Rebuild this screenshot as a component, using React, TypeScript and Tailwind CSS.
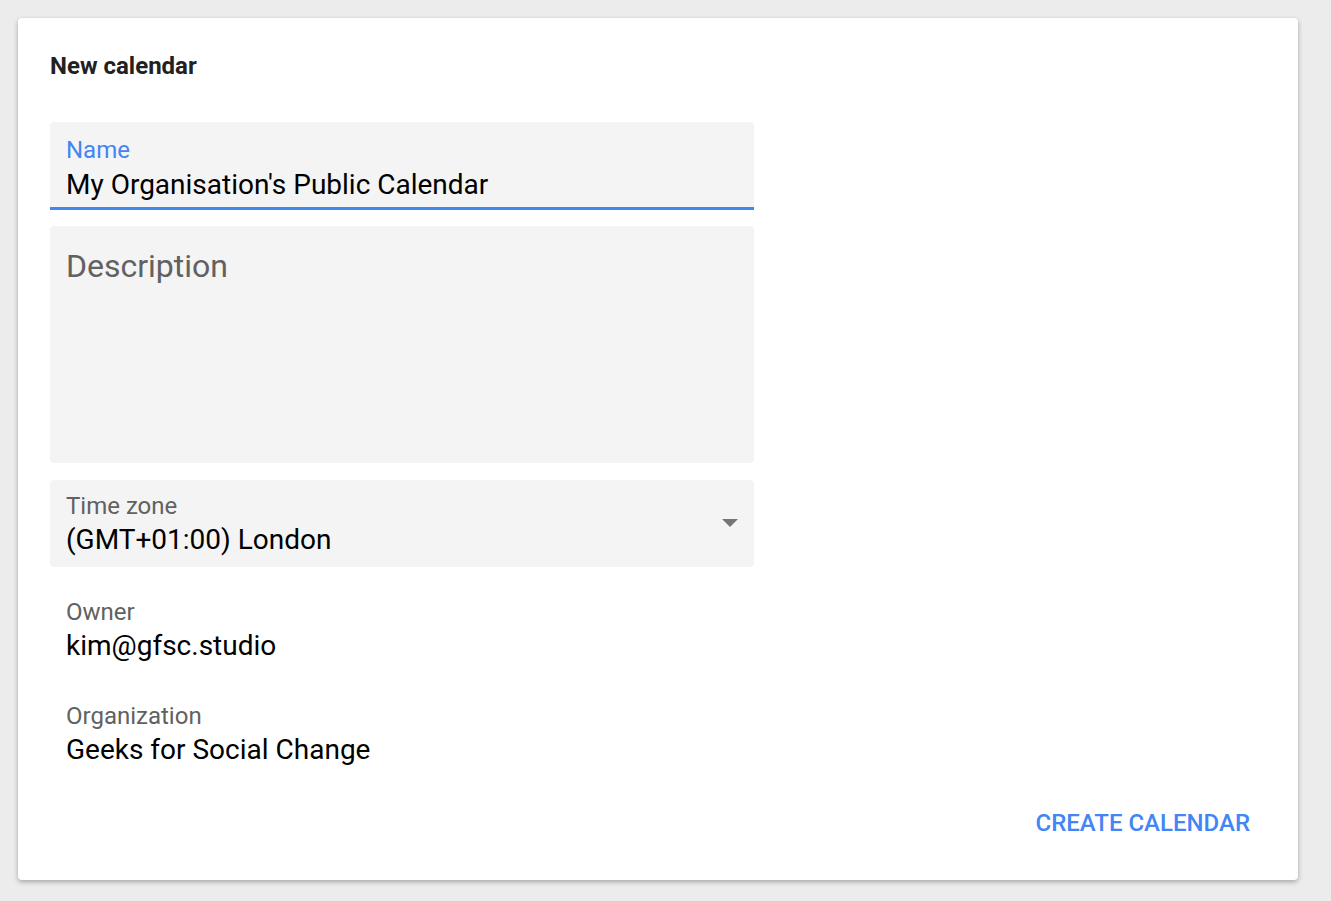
import React from 'react';

const font = { fontFamily: 'Roboto, "Noto Sans", sans-serif' };

interface InfoRowProps {
  label: string;
  value: string;
}

const InfoRow: React.FC<InfoRowProps> = ({ label, value }) => (
  <div className="px-4">
    <p className="text-[24px] leading-[26px] text-[#616161]">{label}</p>
    <p className="mt-[6px] text-[28px] leading-[30px] text-black">{value}</p>
  </div>
);

const App: React.FC = () => {
  return (
    <div className="min-h-[901px] bg-[#ececec] pt-[18px] pl-[18px]" style={font}>
      <div className="flex h-[862px] w-[1280px] flex-col rounded-[4px] bg-white px-[32px] pt-[34px] shadow-[0_2px_5px_rgba(0,0,0,0.3)]">
        {/* Title */}
        <h1 className="text-[24px] font-bold leading-[28px] text-[#212121]">New calendar</h1>

        <div className="mt-[42px] flex w-[704px] flex-col">
          {/* Name Field */}
          <div className="h-[88px] rounded-t-[4px] border-b-[3px] border-[#4285f4] bg-[#f4f4f4] px-4 pt-[15px]">
            <p className="text-[24px] leading-[26px] text-[#4285f4]">Name</p>
            <p className="mt-[7px] text-[28px] leading-[30px] text-black">
              My Organisation's Public Calendar
            </p>
          </div>

          {/* Description Field */}
          <div className="mt-[16px] h-[237px] rounded-[4px] bg-[#f4f4f4] px-4 pt-[22px]">
            <p className="text-[32px] leading-[36px] text-[#616161]">Description</p>
          </div>

          {/* Time zone Field */}
          <div className="mt-[17px] flex h-[87px] items-center justify-between rounded-[4px] bg-[#f4f4f4] pl-4 pr-4">
            <div>
              <p className="text-[24px] leading-[26px] text-[#616161]">Time zone</p>
              <p className="mt-[6px] text-[28px] leading-[30px] text-black">(GMT+01:00) London</p>
            </div>
            <svg width="16" height="8" viewBox="0 0 16 8" className="mt-[-2px]">
              <path d="M0 0 L16 0 L8 8 Z" fill="#757575" />
            </svg>
          </div>

          {/* Owner / Organization */}
          <div className="mt-[32px] flex flex-col gap-[42px]">
            <InfoRow label="Owner" value="kim@gfsc.studio" />
            <InfoRow label="Organization" value="Geeks for Social Change" />
          </div>
        </div>

        {/* Actions */}
        <div className="mt-[44px] flex justify-end pr-[16px]">
          <button className="text-[24px] font-medium leading-[28px] text-[#4285f4]">
            CREATE CALENDAR
          </button>
        </div>
      </div>
    </div>
  );
};

export default App;
